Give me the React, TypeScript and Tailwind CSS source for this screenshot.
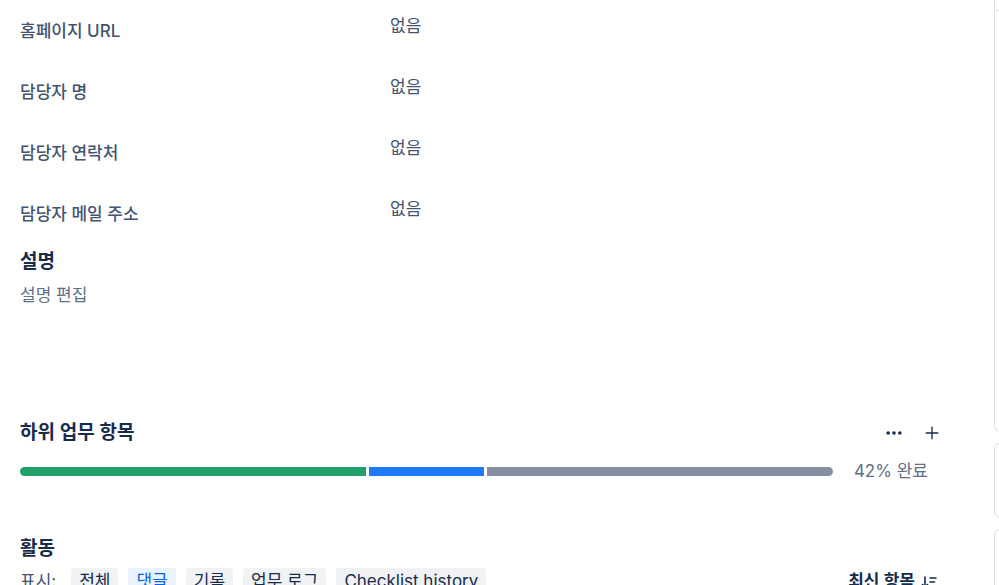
import { MoreHorizontal, Plus } from 'lucide-react';

const fields = ['홈페이지 URL', '담당자 명', '담당자 연락처', '담당자 메일 주소'];
const filters = ['전체', '댓글', '기록', '업무 로그', 'Checklist history'];

function SortIcon() {
  return (
    <svg width="16" height="16" viewBox="0 0 16 16" fill="none" stroke="currentColor" strokeWidth="1.6" strokeLinecap="round">
      <path d="M4 3v10M1.5 10.5L4 13l2.5-2.5" />
      <path d="M9 4h6M9 8h4.5M9 12h3" />
    </svg>
  );
}

export default function App() {
  return (
    <div
      className="flex h-[585px] w-full overflow-hidden bg-white text-[#172b4d]"
      style={{ fontFamily: 'Inter, "Noto Sans CJK KR", sans-serif' }}>
      <main className="w-[994px] shrink-0 pl-[20px] pr-[50px] pt-[1px]">
        {/* field rows */}
        <div>
          {fields.map(label => (
            <div key={label} className="grid h-[61px] grid-cols-[370px_1fr] text-[17px] leading-5 text-[#44546f]">
              <div className="pt-[20px] font-medium">{label}</div>
              <div className="pt-[15px]">없음</div>
            </div>
          ))}
        </div>

        <h2 className="mt-[5px] text-[19px] font-semibold leading-6">설명</h2>
        <p className="mt-[11px] text-[17px] leading-5 text-[#626f86]">설명 편집</p>

        <section className="mt-[116px]">
          <div className="flex h-6 items-center justify-between">
            <h2 className="text-[19px] font-semibold leading-6">하위 업무 항목</h2>
            <div className="flex items-center gap-[14px]">
              <button className="flex h-6 w-6 items-center justify-center text-[#172b4d]">
                <MoreHorizontal size={20} strokeWidth={2.4} />
              </button>
              <button className="flex h-6 w-6 items-center justify-center text-[#172b4d]">
                <Plus size={20} strokeWidth={1.6} />
              </button>
            </div>
          </div>
          <div className="mt-[16px] flex h-5 items-center">
            <div className="grid h-[9px] flex-1 grid-cols-[346fr_115fr_346fr] gap-[3px]">
              <div className="rounded-l-full bg-[#22a06b]" />
              <div className="bg-[#1d7afc]" />
              <div className="rounded-r-full bg-[#8590a2]" />
            </div>
            <span className="ml-[21px] mr-[16px] text-[17px] leading-5 text-[#626f86]">42% 완료</span>
          </div>
        </section>

        <section className="mt-[56px]">
          <h2 className="text-[19px] font-semibold leading-6">활동</h2>
          <div className="mt-[7px] flex items-center justify-between">
            <div className="flex items-center gap-[10px] text-[17px]">
              <span className="mr-[5px] text-[#44546f]">표시:</span>
              {filters.map(f => (
                <button
                  key={f}
                  className={
                    f === '댓글'
                      ? 'h-7 rounded-[3px] bg-[#e9f2ff] px-[8px] text-[#0c66e4]'
                      : 'h-7 rounded-[3px] bg-[#f1f2f4] px-[8px] text-[#172b4d]'
                  }>
                  {f}
                </button>
              ))}
            </div>
            <button className="mr-[7px] flex items-center gap-[6px] text-[17px] font-semibold">
              최신 항목 <SortIcon />
            </button>
          </div>
        </section>
      </main>

      {/* right panel, mostly cut off */}
      <aside className="flex w-[300px] shrink-0 flex-col gap-[11px]">
        <div className="h-[461px] rounded-b-[6px] border border-t-0 border-[#dcdfe4]">
          <div className="mt-[10px] ml-[1px] border-t border-[#dcdfe4]" />
        </div>
        <div className="h-[80px] rounded-[6px] border border-[#dcdfe4]" />
        <div className="h-[60px] rounded-t-[6px] border border-b-0 border-[#dcdfe4]" />
      </aside>
    </div>
  );
}
